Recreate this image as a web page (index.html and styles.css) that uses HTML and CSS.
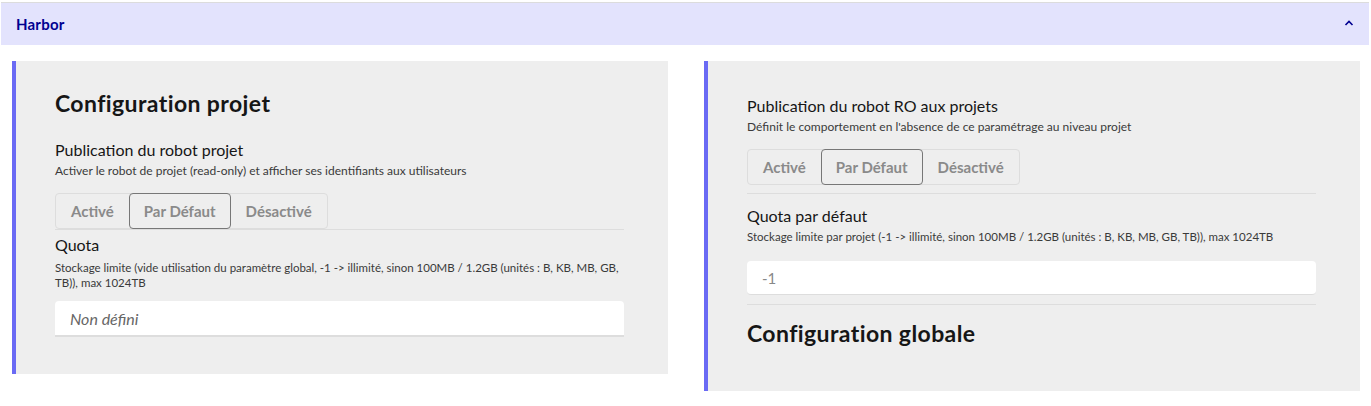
FILE: index.html
```html
<!DOCTYPE html>
<html lang="fr">
<head>
<meta charset="utf-8">
<title>Harbor</title>
<link rel="stylesheet" href="styles.css">
</head>
<body>
<div class="page">
  <header class="accordion-head">
    <span class="accordion-title">Harbor</span>
    <svg class="chevron" width="10" height="8" viewBox="0 0 10 8"><polyline points="1.5,6 5,2.5 8.5,6" fill="none" stroke="#000091" stroke-width="1.6"/></svg>
  </header>
  <main class="columns">
    <section class="card card-left">
      <h2 class="card-title">Configuration projet</h2>
      <div class="field field-first">
        <div class="label">Publication du robot projet</div>
        <div class="hint">Activer le robot de projet (read-only) et afficher ses identifiants aux utilisateurs</div>
        <div class="segmented">
          <button class="seg">Activé</button>
          <button class="seg seg-active">Par Défaut</button>
          <button class="seg">Désactivé</button>
        </div>
      </div>
      <hr class="sep sep-tight">
      <div class="field">
        <div class="label">Quota</div>
        <div class="hint hint-storage hint-multi">Stockage limite (vide utilisation du paramètre global, -1 -&gt; illimité, sinon 100MB / 1.2GB (unités : B, KB, MB, GB, TB)), max 1024TB</div>
        <div class="input input-thick"><span class="placeholder">Non défini</span></div>
      </div>
    </section>
    <section class="card card-right">
      <div class="field">
        <div class="label">Publication du robot RO aux projets</div>
        <div class="hint">Définit le comportement en l'absence de ce paramétrage au niveau projet</div>
        <div class="segmented">
          <button class="seg">Activé</button>
          <button class="seg seg-active">Par Défaut</button>
          <button class="seg">Désactivé</button>
        </div>
      </div>
      <hr class="sep sep-gap">
      <div class="field">
        <div class="label">Quota par défaut</div>
        <div class="hint hint-storage">Stockage limite par projet (-1 -&gt; illimité, sinon 100MB / 1.2GB (unités : B, KB, MB, GB, TB)), max 1024TB</div>
        <div class="input input-thin"><span class="value">-1</span></div>
      </div>
      <hr class="sep sep-after-input">
      <h2 class="card-title title-global">Configuration globale</h2>
    </section>
  </main>
</div>
</body>
</html>
```
FILE: styles.css
```css
* { box-sizing: border-box; }
html, body { margin: 0; padding: 0; background: #fff; }
body {
  font-family: Lato, "Noto Sans", "Liberation Sans", sans-serif;
  color: #161616;
}
.page { padding-top: 2px; }
.accordion-head {
  margin: 0 2px 0 1px;
  height: 43px;
  background: #e3e3fd;
  border-top: 1px solid #dcdcdc;
  display: flex;
  align-items: center;
  justify-content: space-between;
  padding: 0 15px 0 15px;
}
.accordion-title {
  color: #000091;
  font-weight: 700;
  font-size: 15px;
  letter-spacing: 0.2px;
}
.chevron { margin-top: -2px; }
.columns {
  display: grid;
  grid-template-columns: 656px 656px;
  column-gap: 36px;
  padding: 16px 0 0 12px;
  align-items: start;
}
.card {
  background: #eeeeee;
  border-left: 4px solid #6a6af4;
  padding-left: 39px;
  padding-right: 44px;
}
.card-left { padding-top: 28px; padding-bottom: 37px; }
.card-right { padding-top: 33px; padding-bottom: 44px; }
.card-title {
  margin: 0;
  font-size: 23px;
  line-height: 28px;
  font-weight: 700;
  letter-spacing: 0.4px;
}
.field-first { margin-top: 21px; }
.label {
  font-size: 16px;
  line-height: 24px;
}
.hint {
  font-size: 12px;
  line-height: 18px;
  color: #3a3a3a;
}
.hint-storage { font-size: 11.5px; }
.hint-multi { line-height: 15px; margin-top: 3px; }
.segmented {
  display: inline-flex;
  margin-top: 13px;
  border: 1px solid #dddddd;
  border-radius: 4px;
  height: 36px;
}
.seg {
  font-family: inherit;
  font-size: 15px;
  font-weight: 700;
  color: #8a8a8a;
  background: transparent;
  border: 1px solid transparent;
  border-radius: 4px;
  padding: 0 14px;
  margin: -1px 0;
  height: 36px;
}
.seg-active { border-color: #777777; }
.sep {
  border: 0;
  border-top: 1px solid #dddddd;
  margin: 0;
}
.sep-tight { margin: 0 0 3px; }
.sep-gap { margin: 8px 0 10px; }
.input {
  background: #fff;
  border-radius: 4px 4px 0 0;
  display: flex;
  align-items: center;
  padding: 0 15px;
}
.input-thick { margin-top: 11px; height: 36px; border-bottom: 2px solid #dddddd; }
.input-thin { margin-top: 15px; height: 34px; border-bottom: 1px solid #dddddd; border-radius: 4px; }
.placeholder { font-style: italic; font-size: 16px; color: #666666; }
.value { font-size: 15px; color: #888888; }
.sep-after-input { margin: 9px 0 14px; }
```
